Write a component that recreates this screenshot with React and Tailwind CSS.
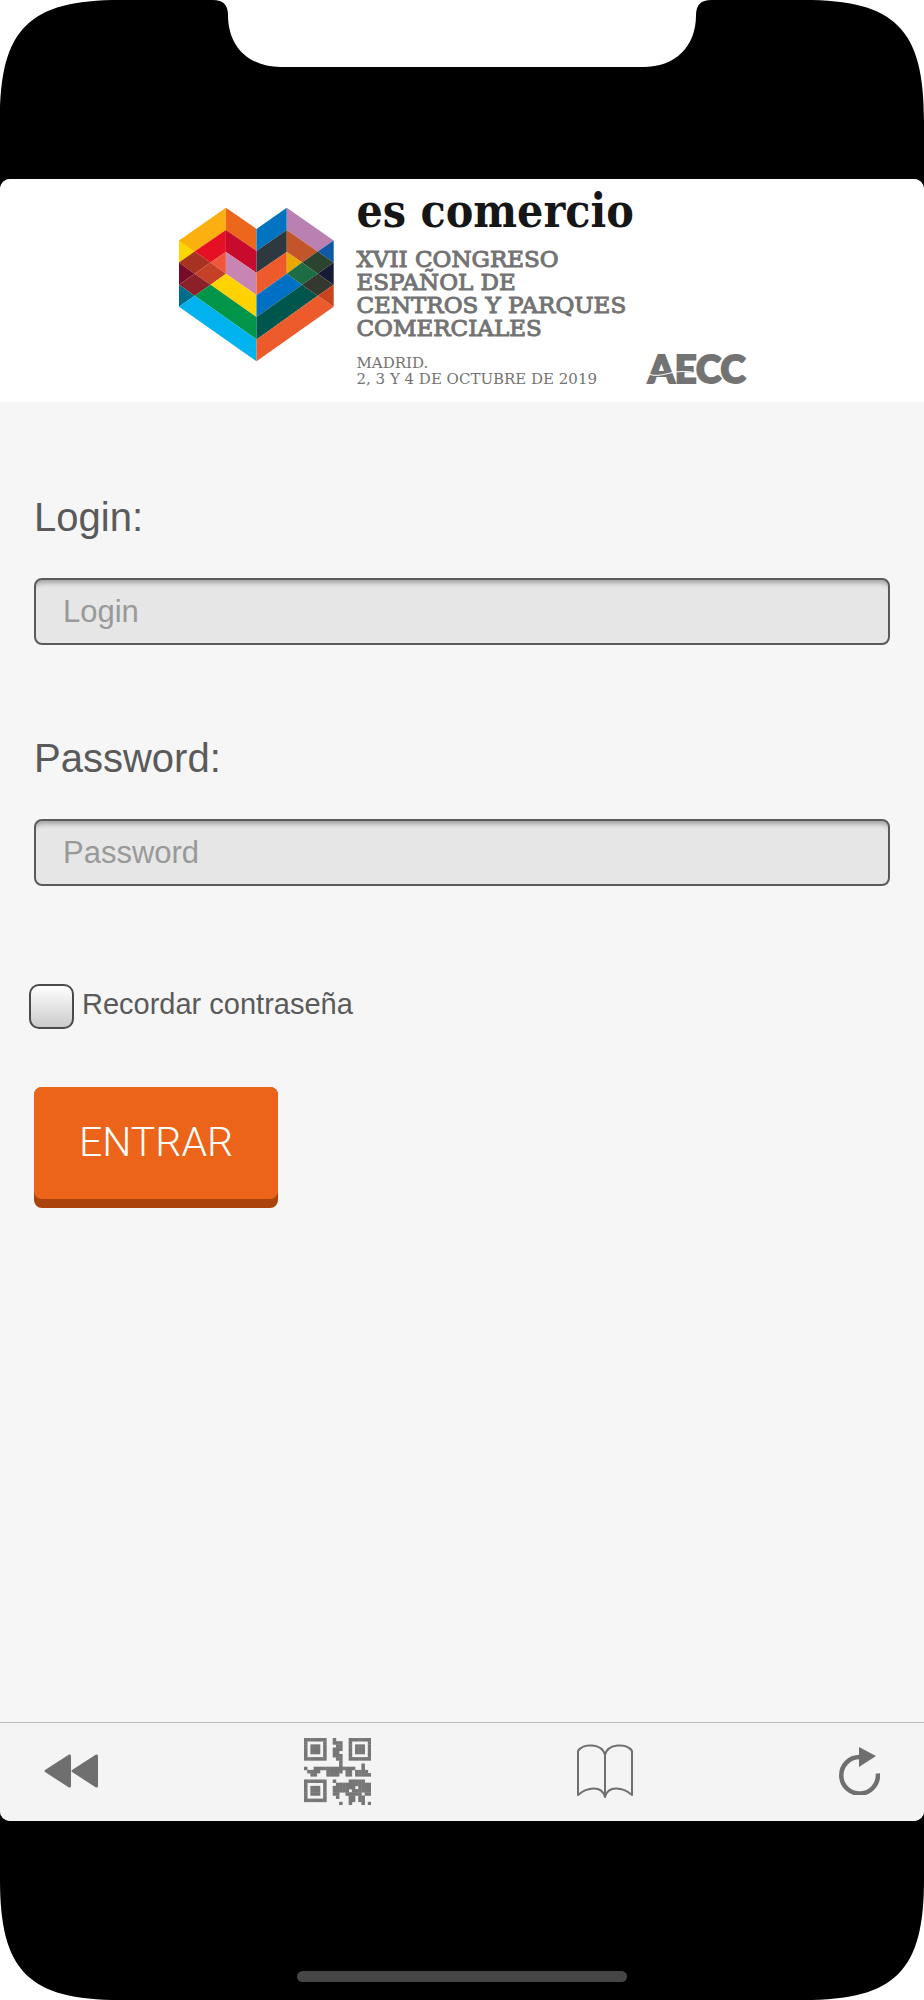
import React, { useState } from "react";

const HEART_FACES = [
  // left side
  ["#FBB010", "58,181 199,82 199,149 58,247"],
  ["#FFD600", "58,181 105,214 58,247"],
  ["#E51023", "105,214 199,149 199,215 153,247"],
  ["#A83222", "105,214 153,247 105,281 58,247"],
  ["#F0563A", "199,215 199,281 153,247"],
  ["#C44128", "153,247 199,281 153,314 105,281"],
  ["#780C28", "58,247 105,281 58,314"],
  ["#8C2028", "105,281 153,314 105,347 58,314"],
  ["#006C8C", "58,314 105,347 58,380"],
  ["#EC671C", "199,82 291,146 291,212 199,149"],
  ["#C80A2C", "199,149 291,212 291,278 199,215"],
  ["#C884B2", "199,215 291,278 291,345 199,281"],
  ["#FFD200", "153,314 199,281 291,345 291,411"],
  ["#009548", "105,347 153,314 291,411 291,478"],
  ["#00B2EE", "58,380 105,347 291,478 291,544"],
  // right side
  ["#0074C0", "291,146 382,82 382,149 291,212"],
  ["#2E383F", "291,212 382,149 382,215 291,278"],
  ["#ED5A2B", "291,278 382,215 382,281 291,345"],
  ["#0070C4", "291,345 382,281 428,314 291,411"],
  ["#00564C", "291,411 428,314 475,347 291,478"],
  ["#ED5A2B", "291,478 475,347 523,380 291,544"],
  ["#BA80B2", "382,82 523,181 475,214 382,149"],
  ["#C2562A", "382,149 475,214 428,247 382,215"],
  ["#E8A800", "382,215 428,247 382,281"],
  ["#0E58A4", "523,181 523,247 475,214"],
  ["#2A4430", "475,214 523,247 475,281 428,247"],
  ["#1C6C44", "428,247 475,281 428,314 382,281"],
  ["#161A34", "523,247 523,314 475,281"],
  ["#34382F", "475,281 523,314 475,347 428,314"],
  ["#C84420", "523,314 523,380 475,347"],
];

const QR_ROWS = [
  "#######..#....#######",
  "#.....#..###..#.....#",
  "#.###.#...##..#.###.#",
  "#.###.#..###..#.###.#",
  "#.###.#..##...#.###.#",
  "#.....#..###..#.....#",
  "#######...##..#######",
  "...........#.........",
  "...........#......#..",
  "#..#############..#..",
  ".####..#####.##.####.",
  "..##...####..##.#####",
  ".....................",
  "#######..#....#####..",
  "#.....#...###########",
  "#.###.#..#######.####",
  "#.###.#..#####.######",
  "#.###.#..##..#####.##",
  "#.....#...#...##.##..",
  "#######.......##.##..",
  "...........#..#...#.#",
];

const HeartLogo = () => (
  <svg
    viewBox="58 80 466 466"
    className="h-[155px] w-[155px] shrink-0"
    aria-hidden="true"
  >
    {HEART_FACES.map(([color, points]) => (
      <polygon key={points} points={points} fill={color} />
    ))}
  </svg>
);

const Notch = () => (
  <svg viewBox="0 0 498 68" className="h-[68px] w-[498px]" aria-hidden="true">
    <path
      fill="#fff"
      d="M0 0C10 0 15 5 15 15C15 47 36 67 68 67H430C462 67 483 47 483 15C483 5 488 0 498 0Z"
    />
  </svg>
);

const Corner = ({ className }) => (
  <svg
    viewBox="0 0 120 120"
    className={`absolute h-[120px] w-[120px] ${className}`}
    aria-hidden="true"
  >
    <path fill="#fff" d="M0 0H120C29 0 0 29 0 120Z" />
  </svg>
);

const RewindIcon = () => (
  <svg viewBox="0 0 54 34" className="h-[34px] w-[54px]" fill="#6f6f6f">
    <path d="M1 16L25 .5Q27 0 27 2V32Q27 34 25 33.500L1 18Q0 17 1 16Z" />
    <path d="M28 16L52 .5Q54 0 54 2V32Q54 34 52 33.500L28 18Q27 17 28 16Z" />
  </svg>
);

const QrIcon = () => (
  <svg viewBox="0 0 21 21" className="h-[67px] w-[67px]" fill="#767676">
    {QR_ROWS.map((row, y) =>
      row
        .split("")
        .map((cell, x) =>
          cell === "#" ? (
            <rect key={`${x}-${y}`} x={x} y={y} width="1.1" height="1.1" />
          ) : null
        )
    )}
  </svg>
);

const BookIcon = () => (
  <svg
    viewBox="0 0 56 54"
    className="h-[54px] w-[56px]"
    fill="none"
    stroke="#6f6f6f"
    strokeWidth="2"
    strokeLinejoin="round"
  >
    <path d="M28 11C25 -1 6 -1 1 7V51C10 43 25 41 28 53C31 41 46 43 55 51V7C50 -1 31 -1 28 11ZM28 11V53" />
  </svg>
);

const ReloadIcon = () => (
  <svg viewBox="0 0 41 48" className="h-[48px] w-[41px]">
    <path
      d="M20.500 10A18.300 18.300 0 1 0 38.800 26.500"
      fill="none"
      stroke="#6f6f6f"
      strokeWidth="4.500"
    />
    <path d="M20 0L37 9L20 20Z" fill="#6f6f6f" />
  </svg>
);

const Field = ({ id, label, type, value, onChange }) => (
  <div>
    <label htmlFor={id} className="block text-[40px] leading-[48px]">
      {label}:
    </label>
    <input
      id={id}
      type={type}
      value={value}
      onChange={(e) => onChange(e.target.value)}
      placeholder={label}
      className="mt-[37px] block h-[67px] w-full rounded-lg border-2 border-[#5a5a5a] bg-[#e6e6e6] px-[27px] text-[31px] text-[#5a5a5a] placeholder-[#999] shadow-[inset_0_8px_5px_-5px_rgba(0,0,0,0.3)] focus:outline-none"
    />
  </div>
);

const Header = () => (
  <header className="flex h-[223px] justify-center gap-[23px] bg-white pt-1">
    <div className="pt-6">
      <HeartLogo />
    </div>
    <div className="w-[389px] whitespace-nowrap font-['DejaVu_Serif',serif] text-[#737373]">
      <h1 className="font-['DejaVu_Serif_Condensed','DejaVu_Serif',serif] text-[46px] leading-[56px] font-bold text-[#161616]">
        es comercio
      </h1>
      <p className="mt-[9px] text-[23px] leading-[23px] [-webkit-text-stroke:1px_#737373]">
        XVII CONGRESO
        <br />
        ESPAÑOL DE
        <br />
        CENTROS Y PARQUES
        <br />
        COMERCIALES
      </p>
      <div className="mt-[15px] flex items-start justify-between">
        <p className="text-[15px] leading-4">
          MADRID.
          <br />
          2, 3 Y 4 DE OCTUBRE DE 2019
        </p>
        <div className="relative font-['Lato',sans-serif] text-[38px] leading-[26px] font-black [-webkit-text-stroke:2px_#737373]">
          AECC
          <svg
            viewBox="0 0 44 12"
            className="absolute bottom-0 left-0 h-3 w-11"
            fill="none"
            stroke="#fff"
            aria-hidden="true"
          >
            <path d="M0 5C14 10 22 0 44 3" />
          </svg>
        </div>
      </div>
    </div>
  </header>
);

const Toolbar = () => (
  <nav className="flex h-[99px] items-center justify-between border-t border-[#bcbcbc] bg-[#f4f4f4] px-11 pb-[2px]">
    <button type="button" aria-label="Atrás">
      <RewindIcon />
    </button>
    <button type="button" aria-label="Código QR">
      <QrIcon />
    </button>
    <button type="button" aria-label="Agenda">
      <BookIcon />
    </button>
    <button type="button" aria-label="Recargar">
      <ReloadIcon />
    </button>
  </nav>
);

const App = () => {
  const [login, setLogin] = useState("");
  const [password, setPassword] = useState("");
  const [remember, setRemember] = useState(false);

  return (
    <div className="relative flex min-h-screen flex-col bg-black font-['Liberation_Sans',Arial,sans-serif] text-[#5a5a5a]">
      {/* DEVICE CORNERS */}
      <Corner className="top-0 left-0" />
      <Corner className="top-0 right-0 rotate-90" />
      <Corner className="right-0 bottom-0 rotate-180" />
      <Corner className="bottom-0 left-0 -rotate-90" />

      <div className="flex h-[179px] items-start justify-center">
        <Notch />
      </div>

      {/* SCREEN */}
      <div className="flex flex-1 flex-col overflow-hidden rounded-[10px] bg-[#f6f6f6]">
        <Header />

        <main className="flex-1 px-[34px] pt-[91px]">
          <form onSubmit={(e) => e.preventDefault()}>
            <div className="flex flex-col gap-[89px]">
              <Field
                id="login"
                label="Login"
                type="text"
                value={login}
                onChange={setLogin}
              />
              <Field
                id="password"
                label="Password"
                type="password"
                value={password}
                onChange={setPassword}
              />
            </div>

            <div className="-ml-[5px] mt-[98px] flex items-start gap-2">
              <input
                id="remember"
                type="checkbox"
                checked={remember}
                onChange={(e) => setRemember(e.target.checked)}
                className="h-[45px] w-[45px] appearance-none rounded-[10px] border-2 border-[#4a4a4a] bg-linear-to-b from-white to-[#cbcbcb] checked:to-[#999]"
              />
              <label htmlFor="remember" className="text-[29px] leading-10">
                Recordar contraseña
              </label>
            </div>

            <button
              type="submit"
              className="mt-[58px] block h-[121px] rounded-lg bg-[#aa440c] pb-[9px]"
            >
              <span className="flex h-full items-center rounded-lg bg-[#eb6419] px-[45px] font-['Roboto',sans-serif] text-[41px] font-light text-white">
                ENTRAR
              </span>
            </button>
          </form>
        </main>

        <Toolbar />
      </div>

      <div className="flex h-[179px] items-end justify-center pb-[18px]">
        <div className="h-[11px] w-[330px] rounded-full bg-[#464646]" />
      </div>
    </div>
  );
};

export default App;
